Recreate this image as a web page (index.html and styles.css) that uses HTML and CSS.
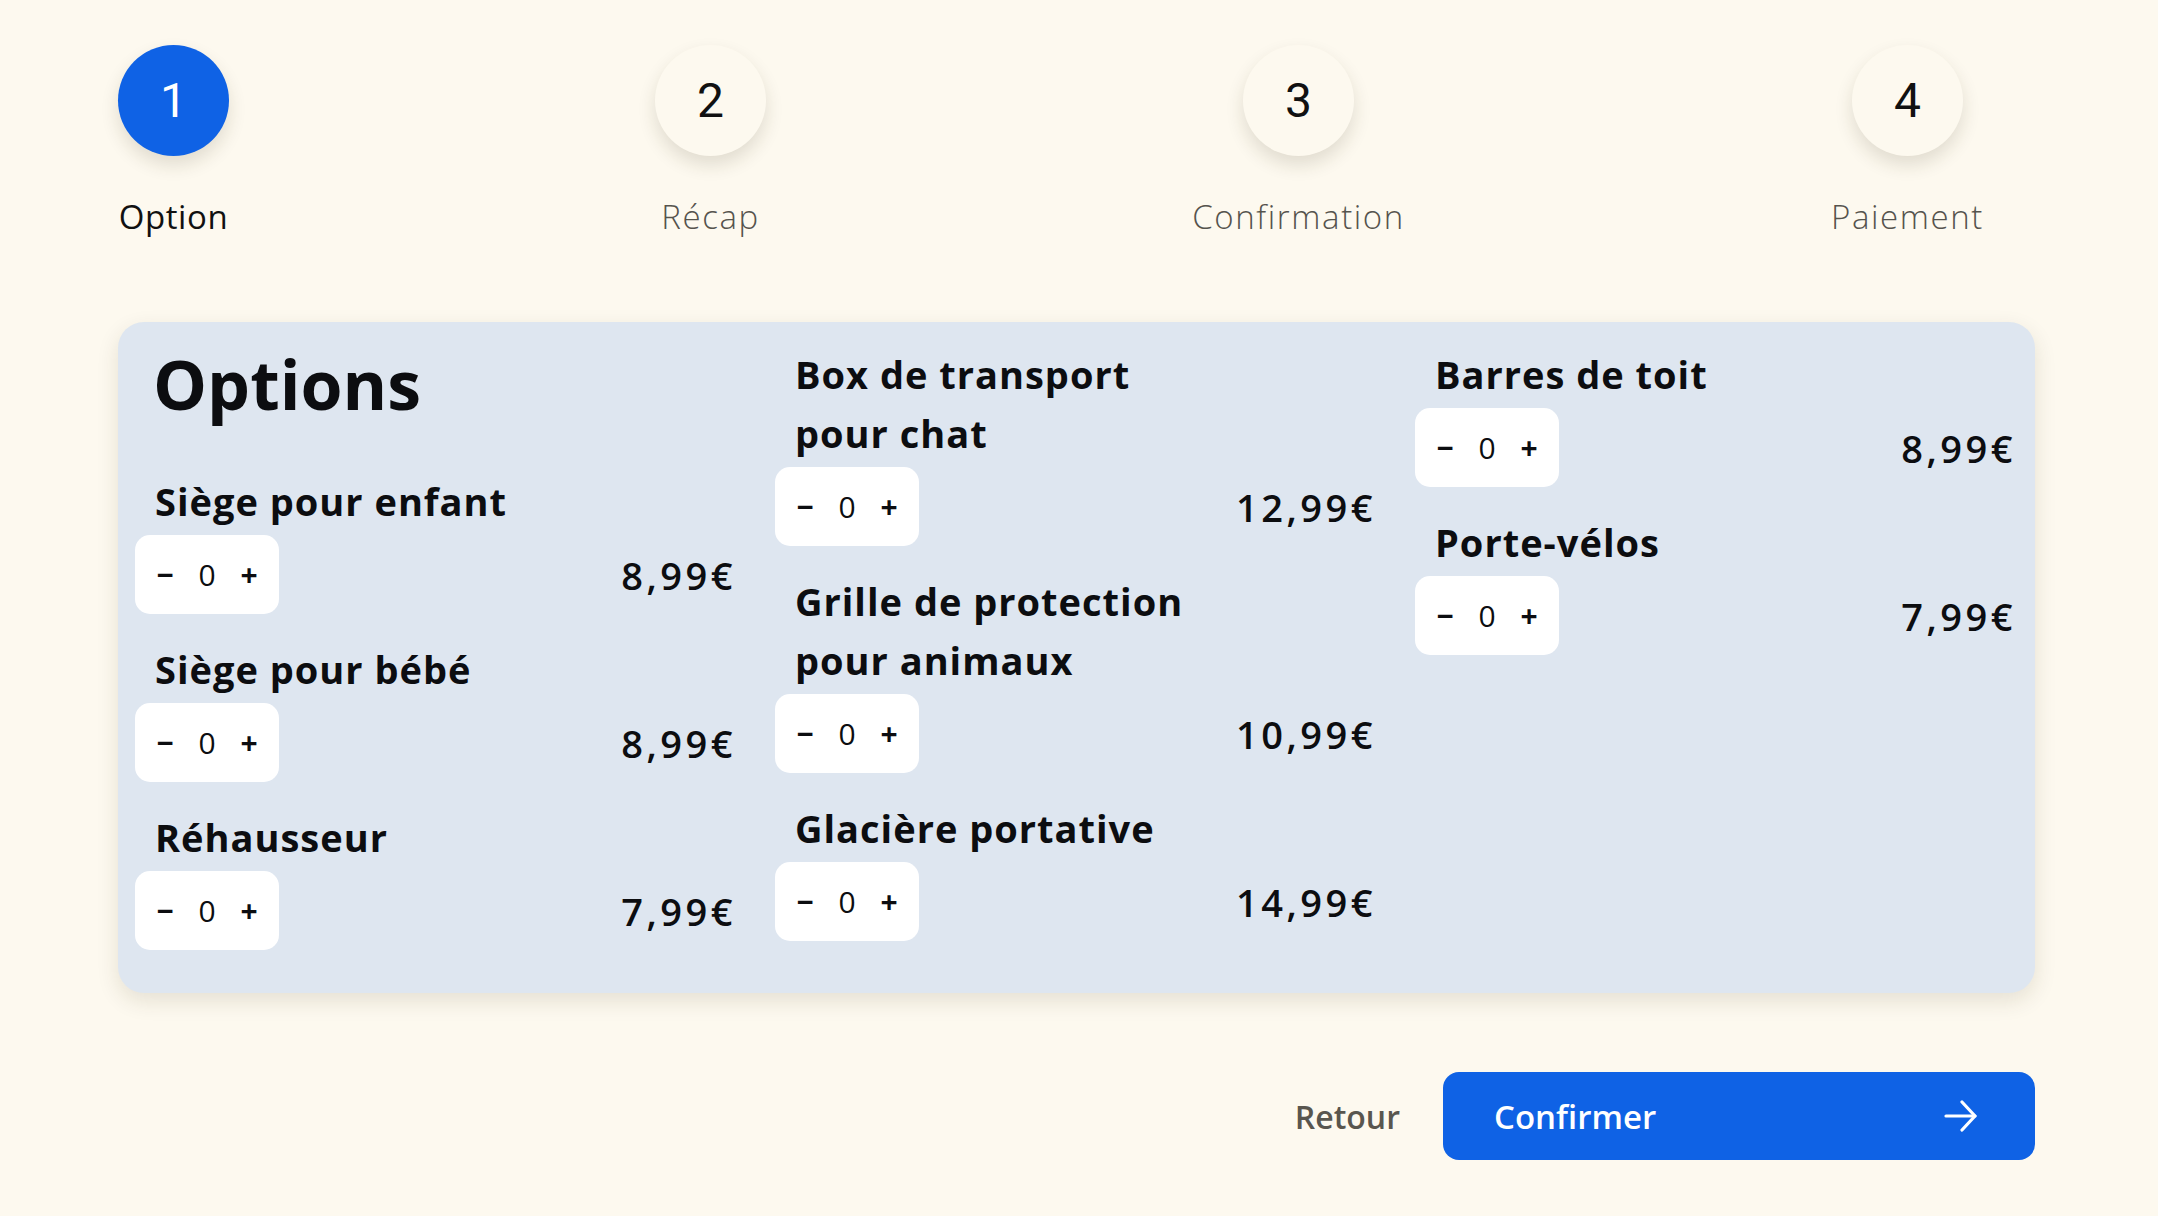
FILE: index.html
```html
<!DOCTYPE html>
<html lang="fr">
<head>
  <meta charset="UTF-8">
  <title>Réservation - Options</title>
  <link rel="stylesheet" href="styles.css">
</head>
<body>
  <div class="page">

    <!-- Steps -->
    <nav class="steps">
      <div class="step active">
        <div class="step-circle">1</div>
        <span class="step-label">Option</span>
      </div>
      <div class="step">
        <div class="step-circle">2</div>
        <span class="step-label">Récap</span>
      </div>
      <div class="step">
        <div class="step-circle">3</div>
        <span class="step-label">Confirmation</span>
      </div>
      <div class="step">
        <div class="step-circle">4</div>
        <span class="step-label">Paiement</span>
      </div>
    </nav>

    <!-- Options card -->
    <section class="card">
      <div class="col">
        <h1 class="card-title">Options</h1>
        <div class="option">
          <h3 class="option-name">Siège pour enfant</h3>
          <div class="option-row">
            <div class="counter"><span class="minus">−</span><span class="qty">0</span><span class="plus">+</span></div>
            <span class="price">8,99€</span>
          </div>
        </div>
        <div class="option">
          <h3 class="option-name">Siège pour bébé</h3>
          <div class="option-row">
            <div class="counter"><span class="minus">−</span><span class="qty">0</span><span class="plus">+</span></div>
            <span class="price">8,99€</span>
          </div>
        </div>
        <div class="option">
          <h3 class="option-name">Réhausseur</h3>
          <div class="option-row">
            <div class="counter"><span class="minus">−</span><span class="qty">0</span><span class="plus">+</span></div>
            <span class="price">7,99€</span>
          </div>
        </div>
      </div>

      <div class="col">
        <div class="option">
          <h3 class="option-name">Box de transport<br>pour chat</h3>
          <div class="option-row">
            <div class="counter"><span class="minus">−</span><span class="qty">0</span><span class="plus">+</span></div>
            <span class="price">12,99€</span>
          </div>
        </div>
        <div class="option">
          <h3 class="option-name">Grille de protection<br>pour animaux</h3>
          <div class="option-row">
            <div class="counter"><span class="minus">−</span><span class="qty">0</span><span class="plus">+</span></div>
            <span class="price">10,99€</span>
          </div>
        </div>
        <div class="option">
          <h3 class="option-name">Glacière portative</h3>
          <div class="option-row">
            <div class="counter"><span class="minus">−</span><span class="qty">0</span><span class="plus">+</span></div>
            <span class="price">14,99€</span>
          </div>
        </div>
      </div>

      <div class="col">
        <div class="option">
          <h3 class="option-name">Barres de toit</h3>
          <div class="option-row">
            <div class="counter"><span class="minus">−</span><span class="qty">0</span><span class="plus">+</span></div>
            <span class="price">8,99€</span>
          </div>
        </div>
        <div class="option">
          <h3 class="option-name">Porte-vélos</h3>
          <div class="option-row">
            <div class="counter"><span class="minus">−</span><span class="qty">0</span><span class="plus">+</span></div>
            <span class="price">7,99€</span>
          </div>
        </div>
      </div>
    </section>

    <!-- Actions -->
    <div class="actions">
      <a href="#" class="back">Retour</a>
      <button class="confirm">
        <span>Confirmer</span>
        <svg width="34" height="32" viewBox="0 0 34 32" fill="none" stroke="#fff" stroke-width="3.2" stroke-linecap="round" stroke-linejoin="round">
          <path d="M2 16 H31"/>
          <path d="M18 2 L31 16 L18 30"/>
        </svg>
      </button>
    </div>

  </div>
</body>
</html>
```

FILE: styles.css
```css
/* Page */
body {
  margin: 0;
  background-color: #fdf9ef;
  font-family: "Open Sans", "Liberation Sans", sans-serif;
  color: #0c0d10;
}
.page {
  width: 1917px;
  margin-left: 118px;
}

/* Steps */
.steps {
  display: flex;
  justify-content: space-between;
  padding: 45px 51px 0 0;
}
.step {
  display: flex;
  flex-direction: column;
  align-items: center;
}
.step-circle {
  width: 111px;
  height: 111px;
  border-radius: 50%;
  background-color: #fdf9ef;
  box-shadow: 0 9px 18px rgba(60, 50, 20, 0.14);
  display: flex;
  align-items: center;
  justify-content: center;
  font-family: Roboto, "Liberation Sans", sans-serif;
  font-size: 48px;
  color: #111;
}
.step.active .step-circle {
  background-color: #0f62e5;
  color: #fff;
}
.step-label {
  margin-top: 40px;
  font-size: 33px;
  line-height: 42px;
  font-weight: 300;
  letter-spacing: 1.6px;
  color: #55534d;
}
.step.active .step-label {
  font-weight: 400;
  letter-spacing: 0.6px;
  color: #111;
}

/* Card */
.card {
  margin-top: 84px;
  background-color: #dee6f0;
  border-radius: 26px;
  box-shadow: 0 8px 22px rgba(60, 50, 20, 0.12);
  padding: 23px 22px 43px 17px;
  display: grid;
  grid-template-columns: repeat(3, 1fr);
  column-gap: 42px;
  align-items: start;
}
.col {
  display: flex;
  flex-direction: column;
  gap: 26px;
}
.card-title {
  margin: 0 0 23px;
  padding-left: 18px;
  font-size: 68px;
  line-height: 78px;
  font-weight: 700;
}
.option-name {
  margin: 0 0 4px;
  padding-left: 20px;
  font-size: 38px;
  line-height: 59px;
  font-weight: 700;
  letter-spacing: 1px;
}
.option-row {
  display: flex;
  align-items: center;
  justify-content: space-between;
}
.counter {
  display: flex;
  align-items: center;
  gap: 14px;
  height: 79px;
  padding: 0 16px;
  background-color: #fff;
  border-radius: 15px;
}
.counter span {
  width: 28px;
  text-align: center;
  font-size: 30px;
}
.counter .minus,
.counter .plus {
  font-weight: 700;
}
.price {
  font-size: 38px;
  font-weight: 600;
  letter-spacing: 3.5px;
  margin-right: -3px;
}

/* Actions */
.actions {
  display: flex;
  justify-content: flex-end;
  align-items: center;
  gap: 43px;
  margin-top: 79px;
}
.back {
  font-size: 32px;
  font-weight: 600;
  color: #59564f;
  text-decoration: none;
}
.confirm {
  width: 592px;
  height: 88px;
  display: flex;
  align-items: center;
  justify-content: space-between;
  padding: 0 57px 0 51px;
  border: none;
  border-radius: 16px;
  background-color: #0f62e5;
  color: #fff;
  font-family: inherit;
  font-size: 33px;
  font-weight: 600;
}
```
